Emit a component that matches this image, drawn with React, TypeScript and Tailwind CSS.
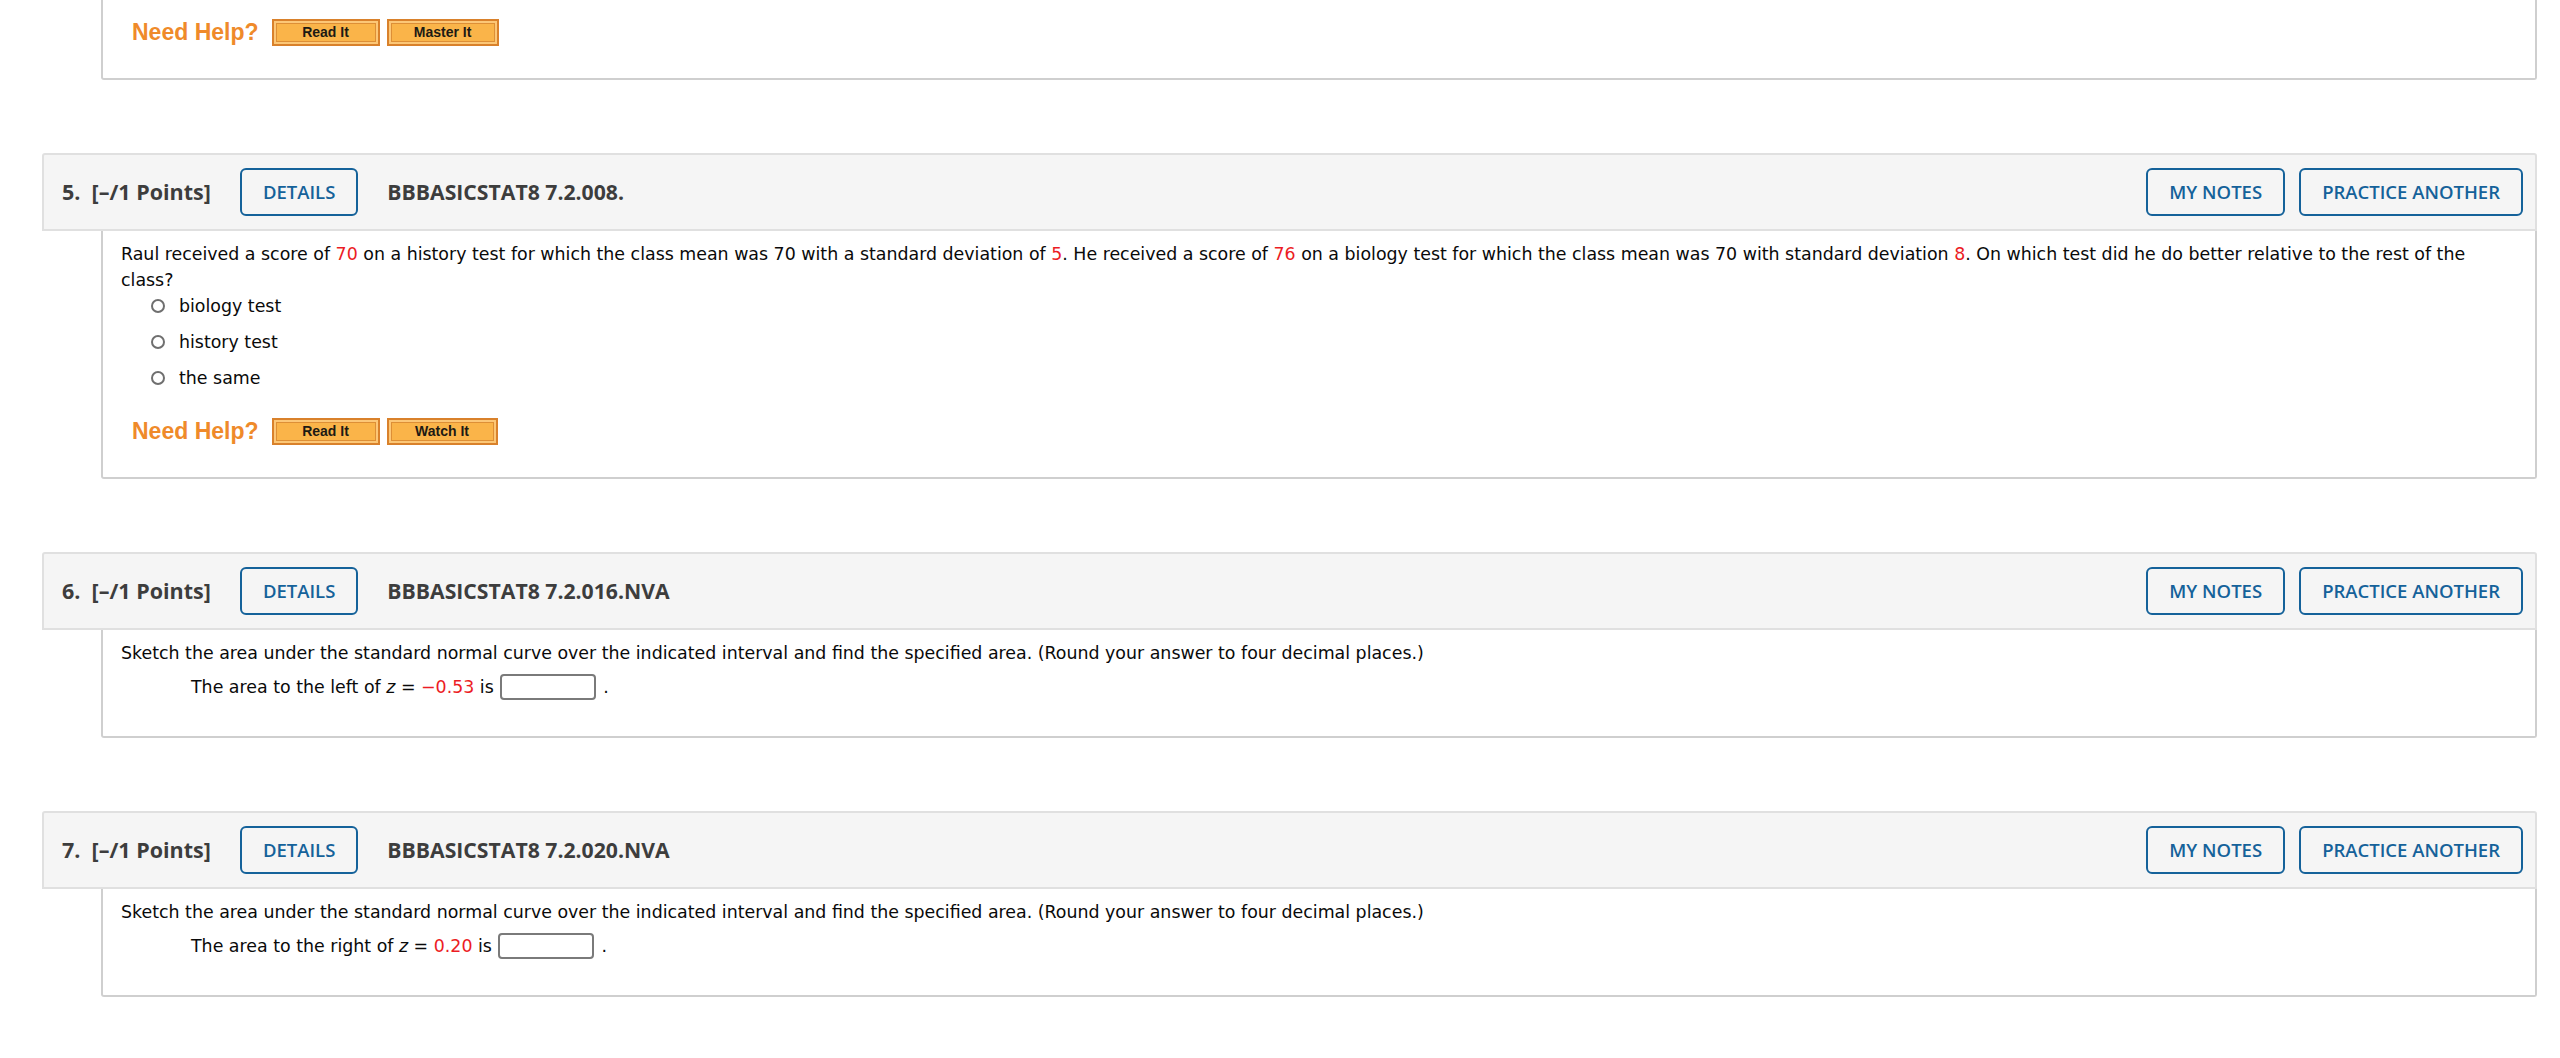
import React from 'react';

const Red = ({ children }: { children: React.ReactNode }) => (
  <span className="text-[#ec1c24]">{children}</span>
);

const HelpButton = ({ label, w }: { label: string; w: string }) => (
  <div className={`h-[27px] ${w} border-2 border-[#d9812b] bg-[#fcc777] p-[2px]`}>
    <div className="flex h-full w-full items-center justify-center border border-[#dd8f36] bg-[#fab449] font-['Liberation_Sans',Arial,sans-serif] text-[14px] font-bold leading-none text-[#1d1a14]">
      {label}
    </div>
  </div>
);

const NeedHelp = ({ second, secondW }: { second: string; secondW: string }) => (
  <div className="flex h-[28px] items-center pl-[11px]">
    <span className="font-['Liberation_Sans',Arial,sans-serif] text-[23px] font-bold leading-none text-[#ef8a2a]">
      Need Help?
    </span>
    <div className="ml-[13px] flex gap-[7px]">
      <HelpButton label="Read It" w="w-[108px]" />
      <HelpButton label={second} w={secondW} />
    </div>
  </div>
);

const OutlineBtn = ({ children }: { children: React.ReactNode }) => (
  <div className="flex h-[48px] items-center rounded-[6px] border-2 border-[#15629a] px-[21px] font-['Open_Sans',sans-serif] text-[18.5px] font-semibold leading-none text-[#15629a]">
    {children}
  </div>
);

const Question = ({
  num,
  code,
  children,
}: {
  num: number;
  code: string;
  children: React.ReactNode;
}) => (
  <div className="flex flex-col">
    <div className="flex h-[78px] items-center rounded-t-[3px] border-2 border-[#e0e0e0] bg-[#f5f5f5] pl-[18px] pr-[12px]">
      <span className="font-['Open_Sans',sans-serif] text-[21.5px] font-bold text-[#3d3d3d]">
        {num}.{'\u00a0'} [–/1 Points]
      </span>
      <div className="ml-[29px]">
        <OutlineBtn>DETAILS</OutlineBtn>
      </div>
      <span className="ml-[29px] font-['Open_Sans',sans-serif] text-[21.2px] font-bold text-[#3d3d3d]">
        {code}
      </span>
      <div className="ml-auto flex gap-[14px]">
        <OutlineBtn>MY NOTES</OutlineBtn>
        <OutlineBtn>PRACTICE ANOTHER</OutlineBtn>
      </div>
    </div>
    <div className="ml-[59px] rounded-b-[3px] border-2 border-t-0 border-[#cfcfcf] bg-white pb-[32px] pl-[18px] pr-[20px] pt-[10px]">
      {children}
    </div>
  </div>
);

const Radio = ({ label }: { label: string }) => (
  <div className="flex h-[26px] items-center pl-[30px]">
    <span className="h-[14px] w-[14px] rounded-full border-2 border-[#6f6f6f] bg-white" />
    <span className="ml-[14px]">{label}</span>
  </div>
);

const AnswerLine = ({ side, value }: { side: string; value: string }) => (
  <div className="mb-[4px] mt-[8px] flex h-[26px] items-center pl-[70px]">
    <span className="whitespace-pre">
      The area to the {side} of <i>z</i> = <Red>{value}</Red> is{' '}
    </span>
    <span className="ml-[1px] h-[26px] w-[96px] rounded-[4px] border-2 border-[#7a7a7a] bg-white" />
    <span className="ml-[7px]">.</span>
  </div>
);

export default function App() {
  return (
    <div className="min-h-screen bg-white">
      <div className="ml-[42px] mr-[23px] flex flex-col gap-[73px] font-['DejaVu_Sans',Verdana,sans-serif] text-[17.4px] leading-[26px] text-[#0a0a0a]">
        <div className="ml-[59px] rounded-b-[3px] border-2 border-t-0 border-[#cfcfcf] bg-white pb-[32px] pl-[18px] pt-[18px]">
          <NeedHelp second="Master It" secondW="w-[112px]" />
        </div>

        <Question num={5} code="BBBASICSTAT8 7.2.008.">
          <p>
            Raul received a score of <Red>70</Red> on a history test for which the class mean was 70 with a
            standard deviation of <Red>5</Red>. He received a score of <Red>76</Red> on a biology test for which
            the class mean was 70 with standard deviation <Red>8</Red>. On which test did he do better relative to
            the rest of the class?
          </p>
          <div className="flex flex-col gap-[10px]">
            <Radio label="biology test" />
            <Radio label="history test" />
            <Radio label="the same" />
          </div>
          <div className="mt-[26px]">
            <NeedHelp second="Watch It" secondW="w-[111px]" />
          </div>
        </Question>

        <Question num={6} code="BBBASICSTAT8 7.2.016.NVA">
          <p>
            Sketch the area under the standard normal curve over the indicated interval and find the specified
            area. (Round your answer to four decimal places.)
          </p>
          <AnswerLine side="left" value="−0.53" />
        </Question>

        <Question num={7} code="BBBASICSTAT8 7.2.020.NVA">
          <p>
            Sketch the area under the standard normal curve over the indicated interval and find the specified
            area. (Round your answer to four decimal places.)
          </p>
          <AnswerLine side="right" value="0.20" />
        </Question>
      </div>
    </div>
  );
}
